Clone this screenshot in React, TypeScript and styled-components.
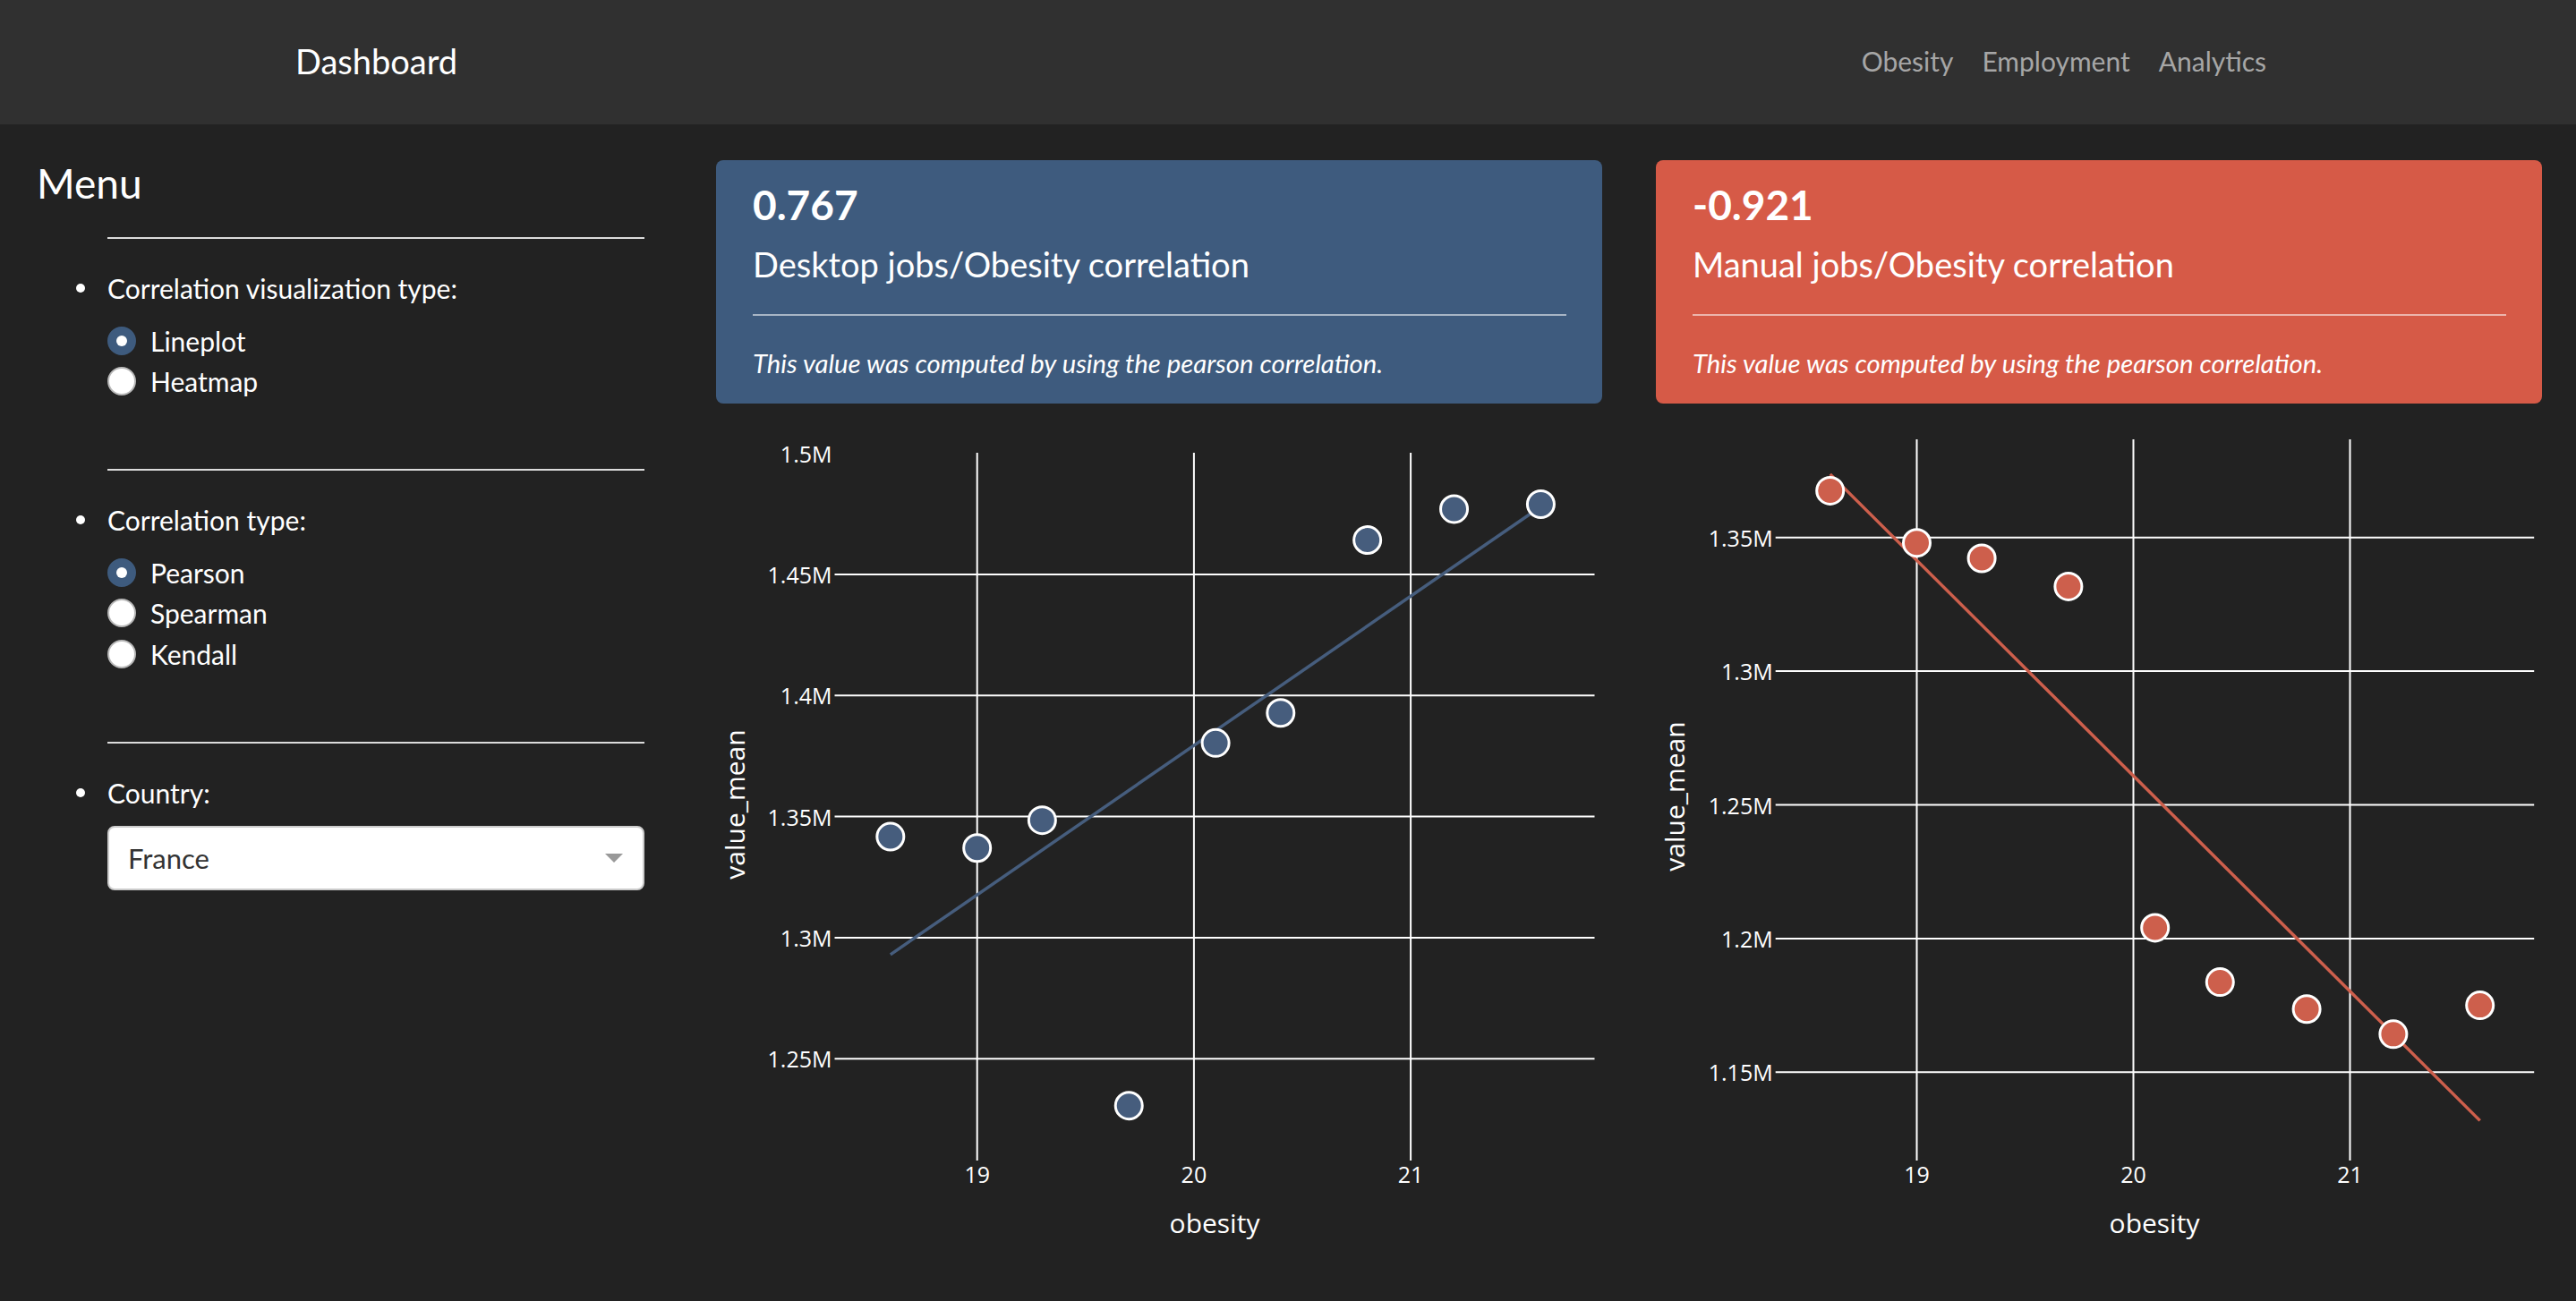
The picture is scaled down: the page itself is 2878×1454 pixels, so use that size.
import React from 'react'
import styled, { createGlobalStyle } from 'styled-components'

const GlobalStyle = createGlobalStyle`
  html, body {
    margin: 0;
    padding: 0;
    background: #222222;
  }
  body {
    font-family: Lato, 'Open Sans', sans-serif;
    color: #ffffff;
  }
`

const Navbar = styled.nav`
  height: 139px;
  background: #303030;
  display: flex;
  align-items: center;
  justify-content: space-between;
  padding: 0 330px 3px;
  box-sizing: border-box;
`

const Brand = styled.span`
  font-size: 38px;
  color: #ffffff;
`

const NavLinks = styled.div`
  display: flex;
`

const NavLink = styled.a`
  font-size: 30px;
  color: #a6a6a6;
  padding: 0 16px;
  text-decoration: none;
`

const Layout = styled.div`
  display: flex;
  padding: 38px 38px 0 41px;
`

const Sidebar = styled.aside`
  width: 719px;
  flex-shrink: 0;
  padding-right: 40px;
  box-sizing: border-box;
`

const MenuTitle = styled.h4`
  margin: 0;
  font-size: 46px;
  font-weight: 400;
  line-height: 1.2;
`

const Controls = styled.div`
  padding-left: 79px;
  margin-top: 33px;
`

const Section = styled.div`
  padding-bottom: 75px;
  &:last-child {
    padding-bottom: 0;
  }
`

const Rule = styled.hr`
  border: 0;
  border-top: 2px solid #dcdcdc;
  margin: 0;
`

const ItemLabel = styled.div`
  display: flex;
  align-items: center;
  margin-top: 31px;
  font-size: 30px;
  line-height: 48px;
`

const Dot = styled.span`
  width: 10px;
  height: 10px;
  border-radius: 50%;
  background: #ffffff;
  margin-left: -35px;
  margin-right: 25px;
  flex-shrink: 0;
`

const RadioGroup = styled.div`
  margin-top: 12px;
`

const RadioRow = styled.label`
  display: flex;
  align-items: center;
  gap: 16px;
  height: 45.5px;
  font-size: 30px;
`

const RadioCircle = styled.span<{ $checked?: boolean }>`
  width: 32px;
  height: 32px;
  box-sizing: border-box;
  border-radius: 50%;
  flex-shrink: 0;
  display: flex;
  align-items: center;
  justify-content: center;
  background: ${p => (p.$checked ? '#3e5b7e' : '#ffffff')};
  border: 2px solid ${p => (p.$checked ? '#3e5b7e' : '#b8b8b8')};
  &::after {
    content: '';
    width: 12px;
    height: 12px;
    border-radius: 50%;
    background: #ffffff;
    display: ${p => (p.$checked ? 'block' : 'none')};
  }
`

const Select = styled.div`
  margin-top: 13px;
  height: 72px;
  box-sizing: border-box;
  background: #ffffff;
  border: 2px solid #cccccc;
  border-radius: 8px;
  display: flex;
  align-items: center;
  justify-content: space-between;
  padding: 0 22px 0 21px;
  font-size: 31px;
  color: #333333;
`

const Caret = styled.span`
  width: 0;
  height: 0;
  border-left: 10px solid transparent;
  border-right: 10px solid transparent;
  border-top: 10px solid #999999;
`

const Main = styled.main`
  flex: 1;
  margin-left: 40px;
  display: grid;
  grid-template-columns: 990px 990px;
  column-gap: 60px;
`

const Column = styled.div`
  display: flex;
  flex-direction: column;
  padding-top: 2px;
`

const Card = styled.div<{ $bg: string }>`
  background: ${p => p.$bg};
  border-radius: 8px;
  height: 272px;
  box-sizing: border-box;
  padding: 22px 40px 0 41px;
  color: #ffffff;
`

const CardValue = styled.div`
  font-size: 46px;
  font-weight: 700;
  line-height: 1.2;
`

const CardTitle = styled.div`
  font-size: 38px;
  line-height: 1.2;
  margin-top: 17px;
`

const CardRule = styled.hr`
  border: 0;
  border-top: 2px solid rgba(255, 255, 255, 0.55);
  margin: 32px 0 0;
`

const CardNote = styled.div`
  font-size: 29.3px;
  font-style: italic;
  line-height: 1.2;
  margin-top: 35px;
`

const ChartBox = styled.div`
  margin-top: 19px;
  height: 950px;
`

type ChartCfg = {
  color: string
  xs: number[]
  ys: number[]
  trend: [number, number, number, number]
  x19: number
  xUnit: number
  yRef: number
  yRefPx: number
  yUnit: number
  plot: { left: number; right: number; top: number; bottom: number }
  yTicks: number[]
  yTitleY: number
}

const xsData = [18.6, 19, 19.3, 19.7, 20.1, 20.4, 20.8, 21.2, 21.6]

const desktop: ChartCfg = {
  color: '#465d7d',
  xs: xsData,
  ys: [1.3417, 1.337, 1.3485, 1.2306, 1.3804, 1.3928, 1.4642, 1.477, 1.479],
  trend: [18.6, 1.293, 21.6, 1.478],
  x19: 291.7,
  xUnit: 242.2,
  yRef: 1.45,
  yRefPx: 172,
  yUnit: 2706,
  plot: { left: 132.5, right: 981.5, top: 36, bottom: 827 },
  yTicks: [1.5, 1.45, 1.4, 1.35, 1.3, 1.25],
  yTitleY: 429,
}

const manual: ChartCfg = {
  color: '#cd5f4c',
  xs: xsData,
  ys: [1.3675, 1.348, 1.3422, 1.3317, 1.204, 1.1837, 1.1736, 1.1642, 1.175],
  trend: [18.6, 1.3737, 21.6, 1.1319],
  x19: 291.5,
  xUnit: 242,
  yRef: 1.35,
  yRefPx: 130.7,
  yUnit: 2988,
  plot: { left: 133.7, right: 981.2, top: 21, bottom: 827 },
  yTicks: [1.35, 1.3, 1.25, 1.2, 1.15],
  yTitleY: 420,
}

const chartFont = "'Open Sans', 'DejaVu Sans', sans-serif"

function Scatter({ cfg }: { cfg: ChartCfg }) {
  const px = (v: number) => cfg.x19 + (v - 19) * cfg.xUnit
  const py = (v: number) => cfg.yRefPx + (cfg.yRef - v) * cfg.yUnit
  const { plot } = cfg
  return (
    <svg width="990" height="950" viewBox="0 0 990 950">
      {[19, 20, 21].map(v => (
        <line key={v} x1={px(v)} x2={px(v)} y1={plot.top} y2={plot.bottom} stroke="#ffffff" strokeWidth="2" />
      ))}
      {cfg.yTicks.map(v => {
        const y = py(v)
        return (
          <g key={v}>
            {Math.abs(y - plot.top) > 3 && (
              <line x1={plot.left} x2={plot.right} y1={y} y2={y} stroke="#ffffff" strokeWidth="2" />
            )}
            <text x={plot.left - 3} y={y} textAnchor="end" dominantBaseline="central" fontFamily={chartFont} fontSize="25" fill="#ffffff">
              {parseFloat(v.toFixed(2))}M
            </text>
          </g>
        )
      })}
      {[19, 20, 21].map(v => (
        <text key={v} x={px(v)} y={842} textAnchor="middle" dominantBaseline="central" fontFamily={chartFont} fontSize="25" fill="#ffffff">
          {v}
        </text>
      ))}
      <line
        x1={px(cfg.trend[0])}
        y1={py(cfg.trend[1])}
        x2={px(cfg.trend[2])}
        y2={py(cfg.trend[3])}
        stroke={cfg.color}
        strokeWidth="3.5"
      />
      {cfg.xs.map((x, i) => (
        <circle key={i} cx={px(x)} cy={py(cfg.ys[i])} r="15" fill={cfg.color} stroke="#ffffff" strokeWidth="3" />
      ))}
      <text x={557} y={896} textAnchor="middle" dominantBaseline="central" fontFamily={chartFont} fontSize="30" fill="#ffffff">
        obesity
      </text>
      <text
        x={20}
        y={cfg.yTitleY}
        textAnchor="middle"
        dominantBaseline="central"
        fontFamily={chartFont}
        fontSize="30"
        fill="#ffffff"
        transform={`rotate(-90 20 ${cfg.yTitleY})`}
      >
        value_mean
      </text>
    </svg>
  )
}

const Radio = ({ label, checked }: { label: string; checked?: boolean }) => (
  <RadioRow>
    <RadioCircle $checked={checked} />
    {label}
  </RadioRow>
)

export default function App() {
  return (
    <>
      <GlobalStyle />
      <Navbar>
        <Brand>Dashboard</Brand>
        <NavLinks>
          <NavLink>Obesity</NavLink>
          <NavLink>Employment</NavLink>
          <NavLink>Analytics</NavLink>
        </NavLinks>
      </Navbar>
      <Layout>
        <Sidebar>
          <MenuTitle>Menu</MenuTitle>
          <Controls>
            <Section>
              <Rule />
              <ItemLabel>
                <Dot />
                Correlation visualization type:
              </ItemLabel>
              <RadioGroup>
                <Radio label="Lineplot" checked />
                <Radio label="Heatmap" />
              </RadioGroup>
            </Section>
            <Section>
              <Rule />
              <ItemLabel>
                <Dot />
                Correlation type:
              </ItemLabel>
              <RadioGroup>
                <Radio label="Pearson" checked />
                <Radio label="Spearman" />
                <Radio label="Kendall" />
              </RadioGroup>
            </Section>
            <Section>
              <Rule />
              <ItemLabel>
                <Dot />
                Country:
              </ItemLabel>
              <Select>
                France
                <Caret />
              </Select>
            </Section>
          </Controls>
        </Sidebar>
        <Main>
          <Column>
            <Card $bg="#3e5b7e">
              <CardValue>0.767</CardValue>
              <CardTitle>Desktop jobs/Obesity correlation</CardTitle>
              <CardRule />
              <CardNote>This value was computed by using the pearson correlation.</CardNote>
            </Card>
            <ChartBox>
              <Scatter cfg={desktop} />
            </ChartBox>
          </Column>
          <Column>
            <Card $bg="#d65a47">
              <CardValue>-0.921</CardValue>
              <CardTitle>Manual jobs/Obesity correlation</CardTitle>
              <CardRule />
              <CardNote>This value was computed by using the pearson correlation.</CardNote>
            </Card>
            <ChartBox>
              <Scatter cfg={manual} />
            </ChartBox>
          </Column>
        </Main>
      </Layout>
    </>
  )
}
